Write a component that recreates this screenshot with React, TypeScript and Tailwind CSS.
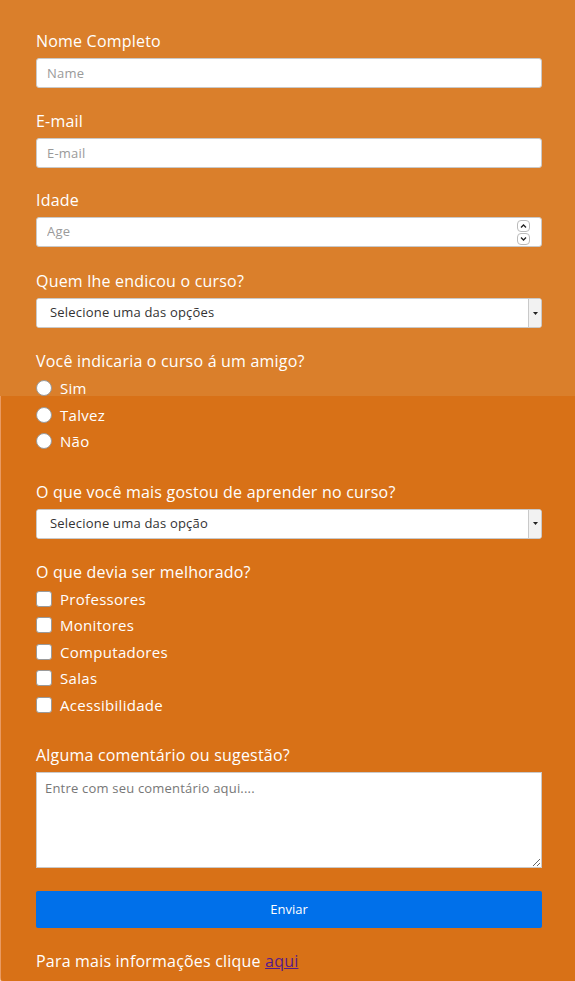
import { useState } from "react"

const font = { fontFamily: '"Open Sans", "Noto Sans", sans-serif' }

const radios = ["Sim", "Talvez", "Não"]
const checks = ["Professores", "Monitores", "Computadores", "Salas", "Acessibilidade"]

function Label({ children }: { children: React.ReactNode }) {
  return <label className="block text-[16px] leading-[22px] tracking-[0.2px] text-white mb-[6px]">{children}</label>
}

function Select({ text }: { text: string }) {
  return (
    <div className="flex h-[30px] w-full bg-white border border-[#c9c9c9] rounded-[3px] overflow-hidden">
      <select className="flex-1 appearance-none bg-white pl-[13px] text-[13px] tracking-[0.2px] text-[#333] outline-none">
        <option>{text}</option>
      </select>
      <div className="w-[13px] flex items-center justify-center bg-[#f2f2f2] border-l border-[#c9c9c9]">
        <svg width="5" height="3" viewBox="0 0 5 3">
          <path d="M0 0h5L2.5 3z" fill="#222" />
        </svg>
      </div>
    </div>
  )
}

const inputCls =
  "block w-full h-[30px] bg-white border border-[#c9c9c9] rounded-[3px] px-[10px] text-[13px] tracking-[0.2px] placeholder:text-[#9a9a9a] outline-none"

export default function App() {
  const [radio, setRadio] = useState<string | null>(null)

  return (
    <div
      style={font}
      className="min-h-[981px] w-[575px] rounded-bl-[4px] border-b border-[#e8965c] bg-[linear-gradient(to_bottom,#da7f2b_396px,transparent_396px),linear-gradient(to_right,#e99a62_1px,#d87117_1px)]"
    >
      <form className="pl-[36px] pr-[33px] pt-[30px] pb-[9px]" onSubmit={(e) => e.preventDefault()}>
        <Label>Nome Completo</Label>
        <input placeholder="Name" className={inputCls} />

        <div className="mt-[22px]">
          <Label>E-mail</Label>
          <input placeholder="E-mail" className={inputCls} />
        </div>

        <div className="mt-[21px]">
          <Label>Idade</Label>
          <div className="flex items-center h-[30px] w-full bg-white border border-[#c9c9c9] rounded-[3px] pl-[10px] pr-[11px]">
            <input
              placeholder="Age"
              className="flex-1 text-[13px] tracking-[0.2px] placeholder:text-[#9a9a9a] outline-none [appearance:textfield]"
            />
            <div className="flex flex-col gap-[1px]">
              <div className="w-[13px] h-[12px] rounded-[4px] border border-[#bbb] flex items-center justify-center">
                <svg width="7" height="4" viewBox="0 0 7 4">
                  <path d="M1 3.5L3.5 1L6 3.5" stroke="#222" strokeWidth="1.3" fill="none" />
                </svg>
              </div>
              <div className="w-[13px] h-[12px] rounded-[4px] border border-[#bbb] flex items-center justify-center">
                <svg width="7" height="4" viewBox="0 0 7 4">
                  <path d="M1 0.5L3.5 3L6 0.5" stroke="#222" strokeWidth="1.3" fill="none" />
                </svg>
              </div>
            </div>
          </div>
        </div>

        <div className="mt-[23px]">
          <Label>Quem lhe endicou o curso?</Label>
          <Select text="Selecione uma das opções" />
        </div>

        <div className="mt-[22px]">
          <p className="text-[16px] leading-[22px] tracking-[0.2px] text-white">Você indicaria o curso á um amigo?</p>
          <div className="mt-[3px]">
            {radios.map((r) => (
              <label key={r} className="flex items-center h-[26.5px] text-[15px] tracking-[0.3px] text-white cursor-pointer">
                <span
                  onClick={() => setRadio(r)}
                  className="w-[16px] h-[16px] rounded-full bg-white border border-[#9a9a9a] mr-[8px] flex items-center justify-center"
                >
                  {radio === r && <span className="w-[8px] h-[8px] rounded-full bg-[#0070ea]" />}
                </span>
                {r}
              </label>
            ))}
          </div>
        </div>

        <div className="mt-[26px]">
          <Label>O que você mais gostou de aprender no curso?</Label>
          <Select text="Selecione uma das opção" />
        </div>

        <div className="mt-[22px]">
          <p className="text-[16px] leading-[22px] tracking-[0.2px] text-white">O que devia ser melhorado?</p>
          <div className="mt-[3px]">
            {checks.map((c) => (
              <label key={c} className="flex items-center h-[26.5px] text-[15px] tracking-[0.3px] text-white cursor-pointer">
                <input
                  type="checkbox"
                  className="appearance-none w-[16px] h-[16px] rounded-[3px] bg-white border border-[#9a9a9a] mr-[8px] checked:bg-[#0070ea]"
                />
                {c}
              </label>
            ))}
          </div>
        </div>

        <div className="mt-[26px]">
          <Label>Alguma comentário ou sugestão?</Label>
          <textarea
            placeholder="Entre com seu comentário aqui...."
            className="block w-full h-[96px] bg-white border border-[#c9c9c9] px-[8px] py-[6px] text-[13px] tracking-[0.2px] placeholder:text-[#777] outline-none"
          />
        </div>

        <button
          type="submit"
          className="block mt-[23px] w-full h-[37px] bg-[#0070ea] rounded-[2px] text-white text-[13px]"
        >
          Enviar
        </button>

        <p className="mt-[22px] text-[16px] leading-[22px] tracking-[0.2px] text-white">
          Para mais informações clique{" "}
          <a href="#" className="text-[#551a8b] underline">
            aqui
          </a>
        </p>
      </form>
    </div>
  )
}
